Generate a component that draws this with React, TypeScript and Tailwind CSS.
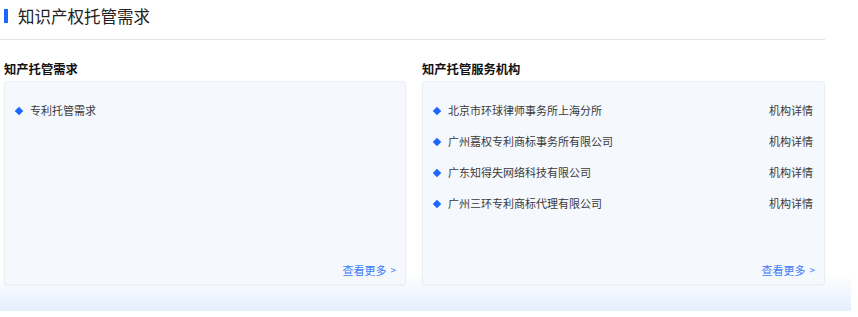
const demands = ['专利托管需求']

const agencies = [
  '北京市环球律师事务所上海分所',
  '广州嘉权专利商标事务所有限公司',
  '广东知得失网络科技有限公司',
  '广州三环专利商标代理有限公司',
]

function Diamond() {
  return <span className="inline-block w-[6px] h-[6px] rotate-45 bg-[#1a66ff] shrink-0" />
}

function MoreLink() {
  return (
    <div className="flex justify-end items-center pr-[9px] pb-[7px] text-[11px] text-[#3b7cf6] leading-[14px]">
      <span>查看更多</span>
      <span className="ml-[4px] text-[10px]">&gt;</span>
    </div>
  )
}

function Card({ title, children }: { title: string; children: React.ReactNode }) {
  return (
    <div className="flex flex-col">
      <h3 className="h-[20px] mt-[59px] mb-[2px] text-[12.3px] font-bold text-[#111] leading-[20px]">{title}</h3>
      <div className="h-[204px] flex flex-col justify-between bg-[#f5f8fd] border border-[#eceef2] rounded-[3px] shadow-[0_1px_2px_rgba(0,0,0,0.04)]">
        <div className="pt-[13px]">{children}</div>
        <MoreLink />
      </div>
    </div>
  )
}

export default function App() {
  return (
    <div
      className="w-[858px] h-[317px] bg-white text-[#3a3a3a]"
      style={{ fontFamily: '"Noto Sans CJK SC", "Noto Sans", sans-serif' }}
    >
      <div className="w-[851px] bg-gradient-to-b from-white from-[88%] to-[#e5effc] pb-[26px]">
        <div className="w-[825px]">
          <div className="h-[40px] border-b border-[#e3e3e3] pl-[4px] pt-[5px] flex items-start">
            <span className="w-[4px] h-[14px] mt-[4px] bg-[#1a66ff]" />
            <span className="ml-[10px] text-[16.5px] leading-[22px] text-[#222]">知识产权托管需求</span>
          </div>
          <div className="grid grid-cols-[402px_403px] gap-[16px] pl-[4px] -mt-[40px]">
            <Card title="知产托管需求">
              {demands.map((d) => (
                <div key={d} className="h-[31px] flex items-center pl-[11px] text-[11px]">
                  <Diamond />
                  <span className="ml-[8px]">{d}</span>
                </div>
              ))}
            </Card>
            <Card title="知产托管服务机构">
              {agencies.map((a) => (
                <div key={a} className="h-[31px] flex items-center pl-[11px] pr-[11px] text-[11px]">
                  <Diamond />
                  <span className="ml-[8px] flex-1">{a}</span>
                  <span>机构详情</span>
                </div>
              ))}
            </Card>
          </div>
        </div>
      </div>
    </div>
  )
}
